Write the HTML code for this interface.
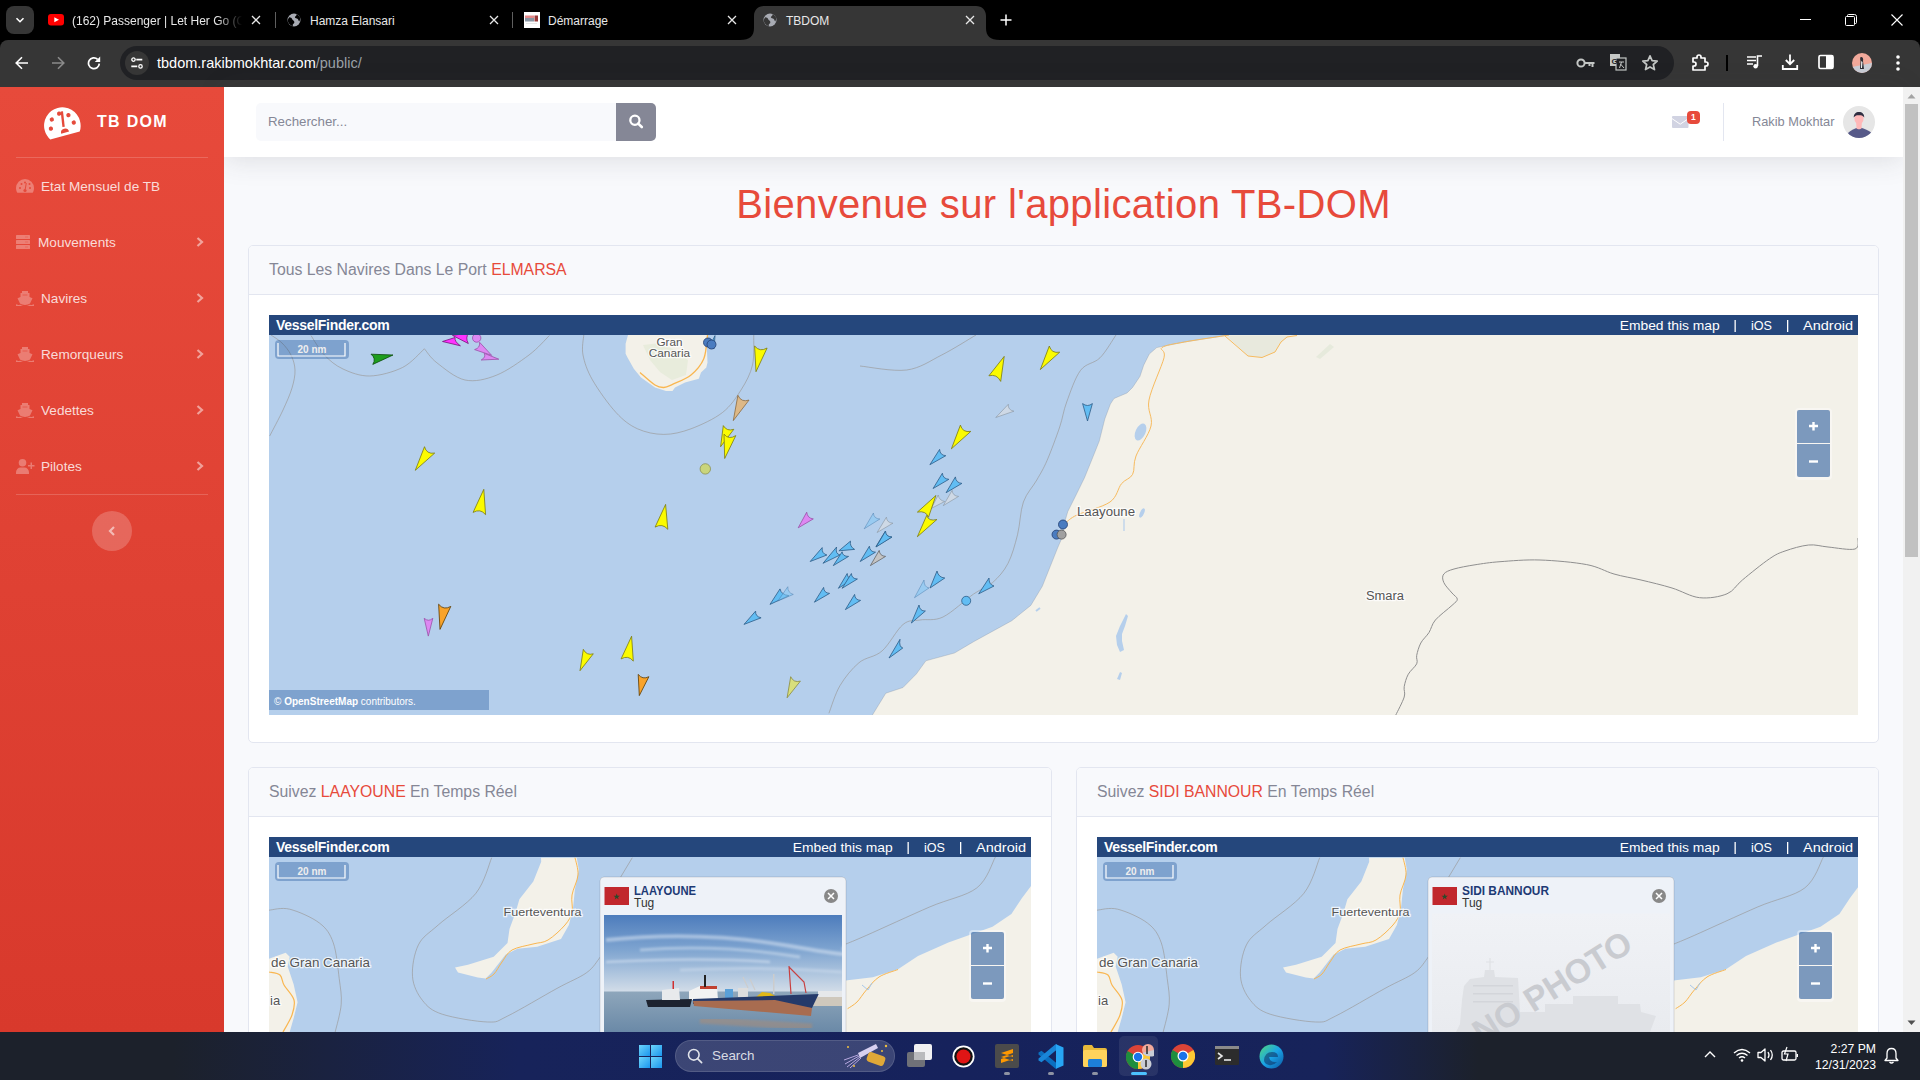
<!DOCTYPE html>
<html><head><meta charset="utf-8">
<style>
*{margin:0;padding:0;box-sizing:border-box}
html,body{width:1920px;height:1080px;overflow:hidden;background:#f8f9fc;font-family:"Liberation Sans",sans-serif}
.abs{position:absolute}
#tabbar{position:absolute;left:0;top:0;width:1920px;height:50px;background:#000}
#toolbar{position:absolute;left:0;top:40px;width:1920px;height:47px;background:#363636;border-radius:8px 8px 0 0}
.tabtxt{position:absolute;color:#e8e8e8;font-size:12px;top:14px;white-space:nowrap}
#sidebar{z-index:5;position:absolute;left:0;top:87px;width:224px;height:945px;background:linear-gradient(180deg,#e74a3b 0%,#d8392c 100%)}
.nav{position:absolute;left:41px;color:rgba(255,255,255,.82);font-size:13.6px;white-space:nowrap;margin-top:1px}
#topbar{position:absolute;left:224px;top:87px;width:1679px;height:70px;background:#fff;box-shadow:0 .15rem 1.75rem 0 rgba(58,59,69,.15)}
#scroll{position:absolute;left:1903px;top:87px;width:17px;height:945px;background:#f1f1f1}
.card{position:absolute;background:#fff;border:1px solid #e3e6f0;border-radius:5px;overflow:hidden}
.chead{position:absolute;left:0;top:0;right:0;height:49px;background:#f8f9fc;border-bottom:1px solid #e3e6f0}
.ctitle{position:absolute;left:20px;top:15px;font-size:15.8px;color:#858796;white-space:nowrap}
.red{color:#e74a3b}
#taskbar{z-index:10;position:absolute;left:0;top:1032px;width:1920px;height:48px;background:linear-gradient(90deg,#1c212b 0%,#1c212b 9%,#1a2240 17%,#17235a 27%,#16225c 50%,#17235a 69%,#1c212b 77%,#1c212b 100%)}
</style></head><body>
<div id="tabbar">
 <div class="abs" style="left:6px;top:6px;width:28px;height:28px;border-radius:8px;background:#363636"></div>
 <svg class="abs" style="left:14px;top:14px" width="12" height="12" viewBox="0 0 12 12"><path d="M2.5 4.2 L6 7.7 L9.5 4.2" stroke="#fff" stroke-width="1.6" fill="none"/></svg>
 <svg class="abs" style="left:48px;top:14px" width="16" height="12" viewBox="0 0 16 12"><rect x="0" y="0" width="16" height="11.5" rx="3" fill="#f00"/><path d="M6.3 3.2 L11 5.75 L6.3 8.3Z" fill="#fff"/></svg>
 <div class="tabtxt" style="left:72px;width:170px;overflow:hidden;-webkit-mask-image:linear-gradient(90deg,#000 85%,transparent)">(162) Passenger | Let Her Go (Official Video)</div>
 <svg class="abs x" style="left:251px;top:15px" width="10" height="10" viewBox="0 0 10 10"><path d="M1 1L9 9M9 1L1 9" stroke="#e8e8e8" stroke-width="1.3"/></svg>
 <div class="abs" style="left:275px;top:12px;width:1px;height:16px;background:#5f5f5f"></div>
 <svg class="abs" style="left:287px;top:13px" width="14" height="14" viewBox="0 0 14 14"><circle cx="7" cy="7" r="6.5" fill="#a8abb3"/><path d="M2.2 4.2c1.4 0 2.6.7 2.9 1.9.3 1.2 1.6 1.4 2.1 2.3.5 1-.2 2.1-1 2.6-.4.3-.6 1-.3 2.4C3.5 12.6 1 10.2.7 7.4c.3-1.2.7-2.4 1.5-3.2zM9.4 1.2c.2.9-.2 1.6-.9 2-.8.4-.8 1.3-.1 1.7.8.5 2 .4 2.6 1.4.5.8.5 1.8 1.3 2.3.6-1.1.9-2.3.9-3.6-.6-1.7-2-3.2-3.8-3.8z" fill="#000"/></svg>
 <div class="tabtxt" style="left:310px">Hamza Elansari</div>
 <svg class="abs x" style="left:489px;top:15px" width="10" height="10" viewBox="0 0 10 10"><path d="M1 1L9 9M9 1L1 9" stroke="#e8e8e8" stroke-width="1.3"/></svg>
 <div class="abs" style="left:512px;top:12px;width:1px;height:16px;background:#5f5f5f"></div>
 <svg class="abs" style="left:524px;top:12px" width="16" height="16" viewBox="0 0 16 16"><rect width="16" height="16" fill="#fff"/><rect x="1" y="3.5" width="9" height="2.5" fill="#e58a8a"/><rect x="1" y="6" width="9" height="3.5" fill="#8a96a4"/><rect x="10.5" y="3.5" width="3.5" height="6" fill="#9a3a3a"/><rect x="2" y="11" width="11" height="1" fill="#e8e8e8"/></svg>
 <div class="tabtxt" style="left:548px">Démarrage</div>
 <svg class="abs x" style="left:727px;top:15px" width="10" height="10" viewBox="0 0 10 10"><path d="M1 1L9 9M9 1L1 9" stroke="#e8e8e8" stroke-width="1.3"/></svg>
 <svg class="abs" style="left:740px;top:6px" width="260" height="34" viewBox="0 0 260 34"><path d="M0 34 C10 34 14 30 14 22 L14 10 C14 4 18 0 24 0 L236 0 C242 0 246 4 246 10 L246 22 C246 30 250 34 260 34Z" fill="#363636"/></svg>
 <svg class="abs" style="left:763px;top:13px" width="14" height="14" viewBox="0 0 14 14"><circle cx="7" cy="7" r="6.5" fill="#a8abb3"/><path d="M2.2 4.2c1.4 0 2.6.7 2.9 1.9.3 1.2 1.6 1.4 2.1 2.3.5 1-.2 2.1-1 2.6-.4.3-.6 1-.3 2.4C3.5 12.6 1 10.2.7 7.4c.3-1.2.7-2.4 1.5-3.2zM9.4 1.2c.2.9-.2 1.6-.9 2-.8.4-.8 1.3-.1 1.7.8.5 2 .4 2.6 1.4.5.8.5 1.8 1.3 2.3.6-1.1.9-2.3.9-3.6-.6-1.7-2-3.2-3.8-3.8z" fill="#363636"/></svg>
 <div class="tabtxt" style="left:786px">TBDOM</div>
 <svg class="abs x" style="left:965px;top:15px" width="10" height="10" viewBox="0 0 10 10"><path d="M1 1L9 9M9 1L1 9" stroke="#e8e8e8" stroke-width="1.3"/></svg>
 <svg class="abs" style="left:1000px;top:14px" width="12" height="12" viewBox="0 0 12 12"><path d="M6 0.5V11.5M0.5 6H11.5" stroke="#fff" stroke-width="1.5"/></svg>
 <div class="abs" style="left:1800px;top:19px;width:11px;height:1px;background:#fff"></div>
 <svg class="abs" style="left:1845px;top:14px" width="12" height="12" viewBox="0 0 12 12"><path d="M2.5 2.5V1.5Q2.5 .5 3.5 .5H9.5Q11.5 .5 11.5 2.5V8.5Q11.5 9.5 10.5 9.5H9.5" stroke="#fff" fill="none" stroke-width="1"/><rect x=".5" y="2.5" width="9" height="9" rx="1" stroke="#fff" fill="none" stroke-width="1"/></svg>
 <svg class="abs" style="left:1891px;top:14px" width="12" height="12" viewBox="0 0 12 12"><path d="M.5 .5L11.5 11.5M11.5 .5L.5 11.5" stroke="#fff" stroke-width="1.1"/></svg>
</div>
<div id="toolbar">
 <svg class="abs" style="left:15px;top:56px;margin-top:-40px" width="14" height="14" viewBox="0 0 14 14"><path d="M13 7H1.5M7 1.2L1.2 7 7 12.8" stroke="#fff" stroke-width="1.6" fill="none"/></svg>
 <svg class="abs" style="left:51px;top:16px" width="14" height="14" viewBox="0 0 14 14"><path d="M1 7H12.5M7 1.2L12.8 7 7 12.8" stroke="#8a8a8a" stroke-width="1.6" fill="none"/></svg>
 <svg class="abs" style="left:87px;top:16px" width="14" height="14" viewBox="0 0 14 14"><path d="M12.3 7.6A5.4 5.4 0 1 1 10.6 3.3" stroke="#fff" stroke-width="1.7" fill="none"/><path d="M13.2 .6V6H7.8Z" fill="#fff"/></svg>
 <div class="abs" style="left:120px;top:6px;width:1554px;height:34px;border-radius:17px;background:#202124"></div>
 <svg class="abs" style="left:1576px;top:17px" width="20" height="12" viewBox="0 0 20 12"><circle cx="5" cy="6" r="3.6" stroke="#c4c7c5" stroke-width="2" fill="none"/><path d="M8.5 6H18.5M16.5 6V10M13.5 6V9" stroke="#c4c7c5" stroke-width="2" fill="none"/></svg>
 <svg class="abs" style="left:1609px;top:13px" width="19" height="19" viewBox="0 0 19 19"><rect x="1" y="1" width="10" height="12" fill="#c4c7c5"/><rect x="7" y="5" width="10" height="12" stroke="#c4c7c5" stroke-width="1.2" fill="#202124"/><text x="2.5" y="11" font-size="8" font-weight="bold" fill="#202124" font-family="Liberation Sans">G</text><path d="M10 9H15M12.5 9L10.5 15M11.5 11L15 15" stroke="#c4c7c5" stroke-width="1"/></svg>
 <svg class="abs" style="left:1641px;top:14px" width="18" height="18" viewBox="0 0 18 18"><path d="M9 1.8L11.1 6.6 16.2 7.1 12.3 10.5 13.5 15.6 9 12.9 4.5 15.6 5.7 10.5 1.8 7.1 6.9 6.6Z" stroke="#c4c7c5" stroke-width="1.7" fill="none" stroke-linejoin="round"/></svg>
 <svg class="abs" style="left:1691px;top:14px" width="19" height="18" viewBox="0 0 19 18"><path d="M2 4H6V3A2 2 0 0 1 10 3V4H14V8H15A2 2 0 0 1 15 12H14V16H2V12H3A2 2 0 0 0 3 8H2Z" stroke="#fff" stroke-width="1.7" fill="none" stroke-linejoin="round"/></svg>
 <div class="abs" style="left:1726px;top:15px;width:2px;height:16px;background:#000"></div>
 <svg class="abs" style="left:1746px;top:14px" width="18" height="16" viewBox="0 0 18 16"><path d="M1 3H10M1 6.5H10M1 10H7M11.5 12V2H16" stroke="#fff" stroke-width="1.6" fill="none"/><circle cx="9.6" cy="12.2" r="2.2" fill="#fff"/></svg>
 <svg class="abs" style="left:1781px;top:13px" width="18" height="18" viewBox="0 0 18 18"><path d="M9 1.5V11M4.8 7L9 11.2 13.2 7M1.8 12V16H16.2V12" stroke="#fff" stroke-width="1.8" fill="none"/></svg>
 <svg class="abs" style="left:1818px;top:14px" width="16" height="16" viewBox="0 0 16 16"><rect x="1" y="1.5" width="14" height="13" rx="1.5" stroke="#fff" stroke-width="1.7" fill="none"/><rect x="8" y="1.5" width="7" height="13" fill="#fff"/></svg>
 <svg class="abs" style="left:1852px;top:13px" width="20" height="20" viewBox="0 0 20 20"><clipPath id="avc"><circle cx="10" cy="10" r="10"/></clipPath><g clip-path="url(#avc)"><rect width="20" height="20" fill="#f1a99b"/><path d="M0 14L20 10V20H0Z" fill="#c9cdd6"/><path d="M9 4C11 4 11.5 6 11 8L12 16H8L8.5 8C8 6 8 4 9 4Z" fill="#2d2d35"/><path d="M9.2 8L10.5 9L10 15H9Z" fill="#f4f4f4"/></g></svg>
 <svg class="abs" style="left:1895px;top:14px" width="6" height="18" viewBox="0 0 6 18"><circle cx="3" cy="3" r="1.8" fill="#fff"/><circle cx="3" cy="9" r="1.8" fill="#fff"/><circle cx="3" cy="15" r="1.8" fill="#fff"/></svg>
 <div class="abs" style="left:125px;top:11px;width:24px;height:24px;border-radius:12px;background:#363636"></div>
 <svg class="abs" style="left:130px;top:16px" width="14" height="14" viewBox="0 0 14 14"><circle cx="3.5" cy="3.6" r="1.7" stroke="#fff" stroke-width="1.3" fill="none"/><path d="M6.3 3.6H12.3M1.3 10.4H7.3" stroke="#fff" stroke-width="1.8"/><circle cx="10.5" cy="10.4" r="1.7" stroke="#fff" stroke-width="1.3" fill="none"/></svg>
 <div class="abs" style="left:157px;top:15px;font-size:14.5px;color:#fff;white-space:nowrap">tbdom.rakibmokhtar.com<span style="color:#9aa0a6">/public/</span></div>
</div>
<div id="sidebar">
 <svg class="abs" style="left:40px;top:17px" width="43" height="37" viewBox="0 0 40 34"><g transform="rotate(-15 20 17)"><path d="M20 3A17 17 0 0 0 3 20C3 23.5 4 27 5.8 29.5H34.2C36 27 37 23.5 37 20A17 17 0 0 0 20 3Z" fill="#fff"/><circle cx="9" cy="20" r="2" fill="#e54a3b"/><circle cx="12" cy="12" r="2" fill="#e54a3b"/><circle cx="20" cy="8.5" r="2" fill="#e54a3b"/><circle cx="28" cy="12" r="2" fill="#e54a3b"/><circle cx="31" cy="20" r="2" fill="#e54a3b"/><path d="M23 7L20.8 21.5" stroke="#e54a3b" stroke-width="2.2"/><path d="M17 27A3.8 3.8 0 1 1 24.6 27Z" fill="#e54a3b"/></g></svg>
 <div class="abs" style="left:97px;top:26px;font-size:16px;font-weight:bold;color:#fff;letter-spacing:1.3px;white-space:nowrap">TB DOM</div>
 <div class="abs" style="left:16px;top:70px;width:192px;height:1px;background:rgba(255,255,255,.18)"></div>
 <svg class="abs" style="left:16px;top:92px" width="18" height="14" viewBox="0 0 18 14"><path d="M9 0A9 9 0 0 0 0 9C0 10.8.5 12.4 1.3 13.8H16.7C17.5 12.4 18 10.8 18 9A9 9 0 0 0 9 0Z" fill="rgba(255,255,255,.3)"/><g fill="#e54a3b"><circle cx="4" cy="9" r="1"/><circle cx="5.5" cy="5" r="1"/><circle cx="9" cy="3.5" r="1"/><circle cx="13.5" cy="5" r="1"/><circle cx="14" cy="9" r="1"/><path d="M10.3 4L9.2 10.5" stroke="#e54a3b" stroke-width="1"/><circle cx="9" cy="11.5" r="1.6"/></g></svg>
 <div class="nav" style="top:91px">Etat Mensuel de TB</div>
 <svg class="abs" style="left:16px;top:148px" width="14" height="14" viewBox="0 0 14 14"><g fill="rgba(255,255,255,.3)"><rect x="0" y="0" width="14" height="4" rx=".6"/><rect x="0" y="5" width="14" height="4" rx=".6"/><rect x="0" y="10" width="14" height="4" rx=".6"/></g><g fill="#e54a3b" opacity=".5"><rect x="9" y="1.6" width="3" height=".8"/><rect x="9" y="6.6" width="3" height=".8"/><rect x="9" y="11.6" width="3" height=".8"/></g></svg>
 <div class="nav" style="top:147px;left:38px">Mouvements</div>
 <svg class="abs chev" style="left:196px;top:150px" width="8" height="10" viewBox="0 0 8 10"><path d="M1.5 1L6 5 1.5 9" stroke="rgba(255,255,255,.5)" stroke-width="2.2" fill="none"/></svg>
 <svg class="abs" style="left:16px;top:204px" width="18" height="15" viewBox="0 0 18 15"><g fill="rgba(255,255,255,.3)"><path d="M6 0H12V2H13.5V6L16.5 7.3 14 12.5C13 13 11 14 9 14 7 14 5 13 4 12.5L1.5 7.3 4.5 6V2H6Z"/><path d="M0 13.2C2 13.8 3 14.5 4 13.5 5.5 14.8 7 15 9 15 11 15 12.5 14.8 14 13.5 15 14.5 16 13.8 18 13.2V15H0Z"/></g><rect x="6.5" y="3" width="5" height="2" fill="#e54a3b" opacity=".35"/></svg>
 <div class="nav" style="top:203px">Navires</div>
 <svg class="abs" style="left:196px;top:206px" width="8" height="10" viewBox="0 0 8 10"><path d="M1.5 1L6 5 1.5 9" stroke="rgba(255,255,255,.5)" stroke-width="2.2" fill="none"/></svg>
 <svg class="abs" style="left:16px;top:260px" width="18" height="15" viewBox="0 0 18 15"><g fill="rgba(255,255,255,.3)"><path d="M6 0H12V2H13.5V6L16.5 7.3 14 12.5C13 13 11 14 9 14 7 14 5 13 4 12.5L1.5 7.3 4.5 6V2H6Z"/><path d="M0 13.2C2 13.8 3 14.5 4 13.5 5.5 14.8 7 15 9 15 11 15 12.5 14.8 14 13.5 15 14.5 16 13.8 18 13.2V15H0Z"/></g><rect x="6.5" y="3" width="5" height="2" fill="#e54a3b" opacity=".35"/></svg>
 <div class="nav" style="top:259px">Remorqueurs</div>
 <svg class="abs" style="left:196px;top:262px" width="8" height="10" viewBox="0 0 8 10"><path d="M1.5 1L6 5 1.5 9" stroke="rgba(255,255,255,.5)" stroke-width="2.2" fill="none"/></svg>
 <svg class="abs" style="left:16px;top:316px" width="18" height="15" viewBox="0 0 18 15"><g fill="rgba(255,255,255,.3)"><path d="M6 0H12V2H13.5V6L16.5 7.3 14 12.5C13 13 11 14 9 14 7 14 5 13 4 12.5L1.5 7.3 4.5 6V2H6Z"/><path d="M0 13.2C2 13.8 3 14.5 4 13.5 5.5 14.8 7 15 9 15 11 15 12.5 14.8 14 13.5 15 14.5 16 13.8 18 13.2V15H0Z"/></g><rect x="6.5" y="3" width="5" height="2" fill="#e54a3b" opacity=".35"/></svg>
 <div class="nav" style="top:315px">Vedettes</div>
 <svg class="abs" style="left:196px;top:318px" width="8" height="10" viewBox="0 0 8 10"><path d="M1.5 1L6 5 1.5 9" stroke="rgba(255,255,255,.5)" stroke-width="2.2" fill="none"/></svg>
 <svg class="abs" style="left:16px;top:372px" width="19" height="15" viewBox="0 0 19 15"><g fill="rgba(255,255,255,.3)"><circle cx="6.5" cy="3.8" r="3.8"/><path d="M0 13.5C0 10.5 2 8.5 4.5 8.5H8.5C11 8.5 13 10.5 13 13.5V15H0Z"/><path d="M14.5 3.5H16V6H18.5V7.5H16V10H14.5V7.5H12V6H14.5Z"/></g></svg>
 <div class="nav" style="top:371px">Pilotes</div>
 <svg class="abs" style="left:196px;top:374px" width="8" height="10" viewBox="0 0 8 10"><path d="M1.5 1L6 5 1.5 9" stroke="rgba(255,255,255,.5)" stroke-width="2.2" fill="none"/></svg>
 <div class="abs" style="left:16px;top:407px;width:192px;height:1px;background:rgba(255,255,255,.18)"></div>
 <div class="abs" style="left:92px;top:424px;width:40px;height:40px;border-radius:20px;background:rgba(255,255,255,.2)"></div>
 <svg class="abs" style="left:108px;top:439px" width="8" height="10" viewBox="0 0 8 10"><path d="M6 1L2 5 6 9" stroke="rgba(255,255,255,.55)" stroke-width="2.2" fill="none"/></svg>
</div>
<div id="topbar">
 <div class="abs" style="left:32px;top:16px;width:360px;height:38px;background:#f8f9fc;border-radius:5px 0 0 5px"></div>
 <div class="abs" style="left:44px;top:27px;font-size:13.3px;color:#858796;white-space:nowrap">Rechercher...</div>
 <div class="abs" style="left:392px;top:16px;width:40px;height:38px;background:#858796;border-radius:0 5px 5px 0"></div>
 <svg class="abs" style="left:404px;top:27px" width="16" height="16" viewBox="0 0 16 16"><circle cx="6.9" cy="6.2" r="4.6" stroke="#fff" stroke-width="2.3" fill="none"/><path d="M10.2 9.6L13.8 13" stroke="#fff" stroke-width="2.6" stroke-linecap="round"/></svg>
 <svg class="abs" style="left:1448px;top:29px" width="17" height="12" viewBox="0 0 17 12"><rect x="0" y="0" width="16.5" height="12" rx="1" fill="#d1d3e2"/><path d="M0 2.6L8.2 8.2 16.5 2.6" stroke="#fff" stroke-width="1" fill="none"/></svg>
 <div class="abs" style="left:1463px;top:24px;width:12.5px;height:12.5px;border-radius:4px;background:#e74a3b;color:#fff;font-size:8.5px;font-weight:bold;text-align:center;line-height:12.5px">1</div>
 <div class="abs" style="left:1499px;top:16px;width:1px;height:38px;background:#e3e6f0"></div>
 <div class="abs" style="left:1528px;top:27px;font-size:12.8px;color:#858796;white-space:nowrap">Rakib Mokhtar</div>
 <svg class="abs" style="left:1619px;top:19px" width="32" height="32" viewBox="0 0 32 32"><clipPath id="avt"><circle cx="16" cy="16" r="16"/></clipPath><g clip-path="url(#avt)"><rect width="32" height="32" fill="#e6e6e6"/><path d="M5 27C8 24 12 22.5 15.5 21.5H17C20.5 22.5 25 24 29 27 26 31 21 33 16 33 11 33 7 31 5 27Z" fill="#575a89"/><path d="M13.2 17H18.8L18.5 22.5C17.5 23.5 14.5 23.5 13.5 22.5Z" fill="#ffb8b8"/><ellipse cx="16" cy="12.5" rx="4.6" ry="5.8" fill="#ffb8b8"/><path d="M10.8 11.5C10.5 8 13 6 16 6 19 6 21.5 8 21.2 11.5 20 9.5 18 9 16 9.2 14 9 12 9.5 10.8 11.5Z" fill="#2f2e41"/></g></svg>
</div>
<div id="scroll"><svg class="abs" style="left:4px;top:6px" width="9" height="6" viewBox="0 0 9 6"><path d="M0.5 5.5L4.5 1 8.5 5.5Z" fill="#a3a3a3"/></svg><div class="abs" style="left:2px;top:17px;width:13px;height:453px;background:#c1c1c1"></div><svg class="abs" style="left:4px;top:933px" width="9" height="6" viewBox="0 0 9 6"><path d="M0.5 .5L4.5 5 8.5 .5Z" fill="#505050"/></svg></div>
<div class="abs" style="left:224px;top:182px;width:1679px;text-align:center;font-size:40px;letter-spacing:.35px;color:#e74a3b">Bienvenue sur l'application TB-DOM</div>
<div class="card" style="left:248px;top:245px;width:1631px;height:498px"><div class="chead"><div class="ctitle">Tous Les Navires Dans Le Port <span class="red">ELMARSA</span></div></div></div>
<div class="card" style="left:248px;top:767px;width:804px;height:400px"><div class="chead"><div class="ctitle">Suivez <span class="red">LAAYOUNE</span> En Temps Réel</div></div></div>
<div class="card" style="left:1076px;top:767px;width:803px;height:400px"><div class="chead"><div class="ctitle">Suivez <span class="red">SIDI BANNOUR</span> En Temps Réel</div></div></div>
<svg class="abs" style="left:269px;top:315px" width="1589" height="400" viewBox="269 315 1589 400">
<rect x="269" y="315" width="1589" height="400" fill="#b5cfec"/>
<polygon points="1228.9,335.0 1184.4,342.0 1156.7,347.6 1149.3,354.0 1143.7,365.2 1140.0,376.3 1132.6,387.4 1127.0,393.0 1114.0,398.5 1110.4,404.0 1104.8,418.9 1099.3,441.0 1091.9,459.6 1084.4,478.0 1075.2,496.7 1067.8,511.5 1064.0,524.4 1063.3,534.8 1057.6,548.0 1050.0,567.0 1042.3,586.3 1030.8,605.4 1011.8,620.7 973.6,641.7 954.5,653.0 925.9,660.8 916.3,674.0 903.0,687.5 885.8,693.2 872.4,715.0 1858.0,715.0 1858.0,335.0" fill="#f3f1e9" />
<polyline points="1228.9,335.0 1184.4,342.0 1156.7,347.6 1149.3,354.0 1143.7,365.2 1140.0,376.3 1132.6,387.4 1127.0,393.0 1114.0,398.5 1110.4,404.0 1104.8,418.9 1099.3,441.0 1091.9,459.6 1084.4,478.0 1075.2,496.7 1067.8,511.5 1064.0,524.4 1063.3,534.8 1057.6,548.0 1050.0,567.0 1042.3,586.3 1030.8,605.4 1011.8,620.7 973.6,641.7 954.5,653.0 925.9,660.8 916.3,674.0 903.0,687.5 885.8,693.2 872.4,715.0" fill="none" stroke="rgba(120,130,145,.35)" stroke-width="0.8" stroke-linejoin="round" />
<polygon points="1226.0,335.5 1248.0,356.0 1262.0,357.5 1275.0,352.0 1281.0,342.0 1290.0,335.5" fill="#e8e9dd" />
<polygon points="1316.0,357.0 1330.0,344.0 1334.0,347.0 1320.0,359.0" fill="#e6eadc" />
<ellipse cx="1140.5" cy="432" rx="5" ry="9" transform="rotate(25 1140.5 432)" fill="#b5cfec"/>
<ellipse cx="1142" cy="513" rx="2" ry="5" transform="rotate(25 1142 513)" fill="#b5cfec"/>
<polygon points="1126.0,614.0 1128.0,616.0 1125.0,626.0 1122.0,634.0 1122.0,641.0 1124.0,650.0 1120.0,652.0 1117.0,645.0 1116.0,636.0 1120.0,626.0" fill="#b5cfec" />
<polygon points="1120.0,672.0 1122.0,673.0 1120.0,680.0 1117.0,679.0" fill="#b5cfec" />
<polyline points="1124.0,519.0 1124.0,531.0" fill="none" stroke="#b5cfec" stroke-width="1.2" stroke-linejoin="round" />
<polyline points="1036.0,611.0 1040.0,608.0" fill="none" stroke="#b5cfec" stroke-width="2" stroke-linejoin="round" />
<polygon points="628.0,335.0 707.5,335.0 706.9,348.8 707.5,362.5 706.3,367.5 701.0,372.5 698.8,378.8 685.0,382.5 675.0,387.5 672.5,391.0 666.0,391.0 655.0,387.5 641.0,377.5 633.8,368.8 627.5,357.5 625.6,353.8 625.6,343.8" fill="#f3f1e9" />
<polygon points="643.0,345.0 660.0,343.0 675.0,350.0 688.0,360.0 686.0,375.0 672.0,380.0 660.0,372.0 650.0,360.0" fill="#e8ecdc" />
<path d="M640.0 372.5 C642.5 374.6 651.0 382.5 655.0 385.0 C659.0 387.5 660.8 387.6 663.8 387.5 C666.7 387.4 668.0 386.5 672.5 384.4 C677.0 382.3 685.8 379.3 691.0 375.0 C696.2 370.7 701.0 365.4 703.8 358.8 C706.5 352.1 706.9 339.0 707.5 335.0" fill="none" stroke="#f9b650" stroke-width="1.3" />
<path d="M583.8 335.0 C583.6 338.3 581.5 347.5 583.0 355.0 C584.5 362.5 587.0 370.4 592.5 380.0 C598.0 389.6 608.5 404.4 616.0 412.5 C623.5 420.6 629.5 425.1 637.5 428.8 C645.5 432.4 654.8 434.4 663.8 434.4 C672.7 434.4 681.2 432.4 691.0 428.8 C700.8 425.1 714.2 419.0 722.5 412.5 C730.8 406.0 736.0 397.9 741.0 390.0 C746.0 382.1 750.4 374.2 752.5 365.0 C754.6 355.8 753.5 340.0 753.8 335.0" fill="none" stroke="rgba(150,145,140,.65)" stroke-width="0.9" />
<path d="M269.7 436.0 C271.9 431.7 279.3 418.0 283.0 410.0 C286.7 402.0 290.0 394.7 292.0 388.0 C294.0 381.3 295.2 375.5 295.0 370.0 C294.8 364.5 293.2 359.5 291.0 355.0 C288.8 350.5 285.3 346.3 282.0 343.0 C278.7 339.7 272.8 336.3 271.0 335.0" fill="none" stroke="rgba(150,145,140,.65)" stroke-width="0.9" />
<path d="M311.0 335.5 C313.2 338.8 319.1 349.4 324.4 355.0 C329.7 360.6 335.4 365.5 343.0 369.0 C350.6 372.5 359.8 376.2 369.7 376.0 C379.6 375.8 393.4 372.0 402.5 367.5 C411.6 363.0 420.8 351.9 424.4 348.8" fill="none" stroke="rgba(150,145,140,.65)" stroke-width="0.9" />
<path d="M424.4 348.8 C426.5 351.1 430.1 357.6 436.9 362.8 C443.7 368.0 455.1 377.9 465.0 380.0 C474.9 382.1 485.6 379.5 496.2 375.3 C506.9 371.1 520.1 361.6 529.0 355.0 C537.9 348.4 546.0 338.8 549.4 335.5" fill="none" stroke="rgba(150,145,140,.65)" stroke-width="0.9" />
<path d="M860.0 366.0 C867.8 366.7 893.1 371.8 906.7 370.0 C920.3 368.2 930.2 360.8 941.7 355.0 C953.2 349.2 970.3 338.3 976.0 335.0" fill="none" stroke="rgba(150,145,140,.65)" stroke-width="0.9" />
<path d="M1116.0 335.0 C1113.3 338.8 1105.9 351.9 1100.0 357.8 C1094.1 363.7 1086.1 362.9 1080.6 370.3 C1075.0 377.7 1070.2 392.6 1066.7 402.0 C1063.2 411.4 1063.0 417.2 1059.7 427.0 C1056.4 436.8 1050.8 451.8 1047.0 460.6 C1043.2 469.4 1040.7 473.1 1036.8 480.0 C1032.9 486.9 1026.6 492.9 1023.4 502.0 C1020.2 511.1 1020.1 524.6 1017.5 534.8 C1014.9 545.0 1012.1 555.4 1008.0 563.4 C1003.9 571.4 998.4 577.4 992.7 582.5 C987.0 587.6 981.9 588.2 973.6 594.0 C965.3 599.8 951.9 612.7 943.0 617.0 C934.1 621.3 926.7 618.8 920.0 620.0 C913.3 621.2 909.3 619.3 903.0 624.5 C896.7 629.7 889.3 644.6 882.0 651.0 C874.7 657.4 866.0 656.9 859.0 662.7 C852.0 668.5 845.0 677.2 840.0 685.6 C835.0 694.0 830.8 708.7 828.9 713.3" fill="none" stroke="rgba(150,145,140,.65)" stroke-width="0.9" />
<path d="M1229.0 335.0 C1221.6 336.2 1195.6 339.9 1184.4 342.0 C1173.2 344.1 1165.4 345.0 1162.0 347.6 C1158.6 350.2 1166.2 349.1 1164.0 357.8 C1161.8 366.5 1151.2 388.6 1149.0 400.0 C1146.8 411.4 1153.2 416.7 1151.0 426.0 C1148.8 435.3 1139.1 447.9 1136.0 456.0 C1132.9 464.1 1135.0 469.8 1132.6 474.4 C1130.2 479.0 1125.3 479.1 1121.5 483.7 C1117.7 488.3 1117.4 496.8 1110.0 502.0 C1102.6 507.2 1084.3 511.6 1077.0 515.0 C1069.7 518.4 1067.8 521.3 1066.0 522.6" fill="none" stroke="#f7bb5f" stroke-width="1" />
<polyline points="1225.0,336.0 1248.0,356.0 1262.0,357.5 1275.0,352.0 1281.0,342.0 1287.0,337.0 1297.0,335.5" fill="none" stroke="#f7bb5f" stroke-width="1" stroke-linejoin="round" />
<path d="M1858.0 538.0 C1857.5 539.8 1860.0 547.5 1855.0 549.0 C1850.0 550.5 1835.7 547.7 1828.0 547.0 C1820.3 546.3 1815.8 544.3 1808.6 545.0 C1801.4 545.7 1791.5 548.7 1785.0 551.0 C1778.5 553.3 1776.7 553.9 1769.6 558.7 C1762.5 563.5 1749.5 574.1 1742.4 580.0 C1735.3 585.9 1734.1 590.8 1727.0 593.8 C1719.9 596.8 1708.8 598.7 1699.6 597.7 C1690.4 596.7 1681.8 591.0 1672.0 588.0 C1662.2 585.0 1650.7 582.3 1641.0 580.0 C1631.3 577.7 1623.0 576.6 1614.0 574.0 C1605.0 571.4 1599.0 566.9 1586.7 564.6 C1574.4 562.3 1554.5 560.5 1540.0 560.0 C1525.5 559.5 1510.8 560.9 1500.0 561.7 C1489.2 562.5 1482.7 563.6 1475.0 564.8 C1467.3 566.0 1459.2 567.5 1454.0 569.0 C1448.8 570.5 1445.5 571.8 1443.8 574.0 C1442.0 576.2 1442.4 579.3 1443.8 582.5 C1445.1 585.7 1449.7 590.2 1452.0 593.0 C1454.3 595.8 1457.3 597.1 1457.3 599.2 C1457.3 601.3 1455.7 601.9 1452.0 605.4 C1448.3 608.9 1439.2 615.5 1435.4 620.0 C1431.6 624.5 1431.4 628.7 1429.0 632.5 C1426.6 636.3 1422.8 639.2 1420.8 643.0 C1418.8 646.8 1417.4 651.9 1416.7 655.4 C1416.0 658.9 1418.1 660.6 1416.7 663.8 C1415.3 666.9 1410.4 670.4 1408.3 674.2 C1406.2 678.0 1404.9 682.9 1404.2 686.7 C1403.5 690.5 1405.6 692.3 1404.2 697.0 C1402.8 701.7 1397.2 712.0 1395.8 715.0" fill="none" stroke="#8f8f8f" stroke-width="1" />
<text x="669.4" y="345.6" font-family="Liberation Sans" font-size="11.5" text-anchor="middle" fill="#555" textLength="26" lengthAdjust="spacingAndGlyphs" stroke="#fff" stroke-width="2.5" stroke-opacity=".75" paint-order="stroke">Gran</text>
<text x="669.4" y="356.5" font-family="Liberation Sans" font-size="11.5" text-anchor="middle" fill="#555" textLength="41.5" lengthAdjust="spacingAndGlyphs" stroke="#fff" stroke-width="2.5" stroke-opacity=".75" paint-order="stroke">Canaria</text>
<text x="1077.0" y="516.0" font-family="Liberation Sans" font-size="12" text-anchor="start" fill="#555" textLength="58" lengthAdjust="spacingAndGlyphs" stroke="#fff" stroke-width="2.5" stroke-opacity=".75" paint-order="stroke">Laayoune</text>
<text x="1366.0" y="600.0" font-family="Liberation Sans" font-size="12" text-anchor="start" fill="#555" textLength="38" lengthAdjust="spacingAndGlyphs" stroke="#fff" stroke-width="2.5" stroke-opacity=".75" paint-order="stroke">Smara</text>
<path d="M442.5 341.5 L455.0 337.5 Q454.4 341.6 460.4 345.8 Z" fill="#ff33ff" stroke="#7a107a" stroke-width=".8" stroke-linejoin="round"/>
<path d="M452.5 335.4 L468.8 333.0 Q465.0 337.6 468.3 343.5 Z" fill="#ff33ff" stroke="#7a107a" stroke-width=".8" stroke-linejoin="round"/>
<path d="M491.7 355.4 L479.6 342.3 Q480.3 348.0 474.6 349.6 Z" fill="#dd88f2" stroke="#9a50a8" stroke-width=".8" stroke-linejoin="round"/>
<path d="M498.8 359.2 L484.2 353.3 Q486.3 357.2 481.2 360.0 Z" fill="#dd88f2" stroke="#9a50a8" stroke-width=".8" stroke-linejoin="round"/>
<path d="M393.0 355.0 L371.0 354.2 Q376.5 358.4 372.8 364.4 Z" fill="#1e9e1e" stroke="#0b4a0b" stroke-width=".8" stroke-linejoin="round"/>
<path d="M415.3 470.3 L424.5 446.7 Q426.5 454.4 434.7 453.1 Z" fill="#fbfb00" stroke="#7a7a10" stroke-width=".8" stroke-linejoin="round"/>
<path d="M483.8 489.3 L473.1 512.4 Q480.3 508.2 485.6 514.7 Z" fill="#fbfb00" stroke="#7a7a10" stroke-width=".8" stroke-linejoin="round"/>
<path d="M440.0 629.4 L438.6 604.2 Q443.7 610.6 450.8 606.4 Z" fill="#f9a32a" stroke="#5a3a00" stroke-width=".8" stroke-linejoin="round"/>
<path d="M428.3 636.1 L424.2 618.3 Q428.5 622.2 432.8 618.3 Z" fill="#dd88f2" stroke="#9a50a8" stroke-width=".8" stroke-linejoin="round"/>
<path d="M665.6 504.4 L655.1 527.1 Q662.4 523.0 667.8 529.3 Z" fill="#fbfb00" stroke="#7a7a10" stroke-width=".8" stroke-linejoin="round"/>
<path d="M580.0 670.7 L583.3 649.3 Q586.5 655.8 593.3 653.8 Z" fill="#fbfb00" stroke="#7a7a10" stroke-width=".8" stroke-linejoin="round"/>
<path d="M631.6 636.2 L621.1 658.9 Q628.2 654.8 633.3 661.1 Z" fill="#fbfb00" stroke="#7a7a10" stroke-width=".8" stroke-linejoin="round"/>
<path d="M639.3 695.6 L638.2 674.4 Q642.6 680.0 648.9 676.7 Z" fill="#f9a32a" stroke="#5a3a00" stroke-width=".8" stroke-linejoin="round"/>
<path d="M787.1 697.8 L790.7 676.7 Q793.7 683.1 800.4 681.1 Z" fill="#d8df7c" stroke="#8a8c40" stroke-width=".8" stroke-linejoin="round"/>
<path d="M798.2 527.8 L806.7 512.2 Q807.4 518.2 813.3 518.9 Z" fill="#dd88f2" stroke="#9a50a8" stroke-width=".8" stroke-linejoin="round"/>
<path d="M756.0 371.7 L754.6 346.0 Q759.8 352.4 767.1 348.0 Z" fill="#fbfb00" stroke="#7a7a10" stroke-width=".8" stroke-linejoin="round"/>
<path d="M733.3 420.6 L737.9 395.3 Q741.2 402.7 749.0 400.1 Z" fill="#ddb886" stroke="#8a6a40" stroke-width=".8" stroke-linejoin="round"/>
<path d="M720.6 446.7 L723.3 425.6 Q726.8 431.7 733.8 429.3 Z" fill="#fbfb00" stroke="#7a7a10" stroke-width=".8" stroke-linejoin="round"/>
<path d="M724.7 458.5 L724.0 434.2 Q728.8 440.1 735.8 435.6 Z" fill="#fbfb00" stroke="#7a7a10" stroke-width=".8" stroke-linejoin="round"/>
<path d="M715.0 335.6 L709.0 348.0 Q712.3 345.7 714.0 349.0 Z" fill="#62bdf3" stroke="#2d5c86" stroke-width=".8" stroke-linejoin="round"/>
<path d="M810.2 561.5 L822.2 547.6 Q821.4 553.5 826.9 555.0 Z" fill="#62bdf3" stroke="#2d5c86" stroke-width=".8" stroke-linejoin="round"/>
<path d="M823.0 563.3 L836.6 547.0 Q834.9 553.7 840.0 555.0 Z" fill="#62bdf3" stroke="#2d5c86" stroke-width=".8" stroke-linejoin="round"/>
<path d="M838.9 550.8 L850.5 541.1 Q849.5 546.5 854.6 549.4 Z" fill="#62bdf3" stroke="#2d5c86" stroke-width=".8" stroke-linejoin="round"/>
<path d="M833.3 565.6 L842.1 551.8 Q842.7 556.6 848.6 556.4 Z" fill="#62bdf3" stroke="#2d5c86" stroke-width=".8" stroke-linejoin="round"/>
<path d="M860.2 561.5 L869.4 546.2 Q869.8 551.9 875.5 552.2 Z" fill="#62bdf3" stroke="#2d5c86" stroke-width=".8" stroke-linejoin="round"/>
<path d="M870.4 565.6 L879.2 550.4 Q879.8 556.1 885.6 556.4 Z" fill="#c4c4c4" stroke="#666" stroke-width=".8" stroke-linejoin="round"/>
<path d="M875.9 546.7 L885.2 531.4 Q885.7 537.0 891.7 537.0 Z" fill="#62bdf3" stroke="#2d5c86" stroke-width=".8" stroke-linejoin="round"/>
<path d="M838.4 588.3 L847.2 573.5 Q847.5 578.9 853.0 579.0 Z" fill="#62bdf3" stroke="#2d5c86" stroke-width=".8" stroke-linejoin="round"/>
<path d="M842.1 588.3 L851.4 573.5 Q851.7 578.9 857.4 579.0 Z" fill="#62bdf3" stroke="#2d5c86" stroke-width=".8" stroke-linejoin="round"/>
<path d="M814.4 602.2 L823.6 587.4 Q823.9 593.0 829.6 593.4 Z" fill="#62bdf3" stroke="#2d5c86" stroke-width=".8" stroke-linejoin="round"/>
<path d="M845.4 609.6 L854.6 594.4 Q854.9 600.1 860.6 600.4 Z" fill="#62bdf3" stroke="#2d5c86" stroke-width=".8" stroke-linejoin="round"/>
<path d="M770.0 604.4 L780.0 588.9 Q781.3 594.9 788.9 595.6 Z" fill="#62bdf3" stroke="#2d5c86" stroke-width=".8" stroke-linejoin="round"/>
<path d="M777.8 601.1 L787.8 586.7 Q787.7 592.9 793.3 594.4 Z" fill="rgba(130,200,245,.55)" stroke="rgba(60,110,160,.5)" stroke-width=".8" stroke-linejoin="round"/>
<path d="M744.0 624.4 L755.6 611.1 Q755.2 616.6 761.1 617.8 Z" fill="#62bdf3" stroke="#2d5c86" stroke-width=".8" stroke-linejoin="round"/>
<path d="M864.2 528.8 L873.4 513.0 Q873.9 518.8 879.9 519.0 Z" fill="rgba(130,200,245,.55)" stroke="rgba(60,110,160,.5)" stroke-width=".8" stroke-linejoin="round"/>
<path d="M877.1 532.5 L886.4 517.2 Q886.9 522.9 892.9 523.2 Z" fill="rgba(215,220,228,.75)" stroke="rgba(120,130,140,.6)" stroke-width=".8" stroke-linejoin="round"/>
<path d="M876.2 546.9 L885.5 531.1 Q886.0 536.9 891.9 537.1 Z" fill="#62bdf3" stroke="#2d5c86" stroke-width=".8" stroke-linejoin="round"/>
<path d="M933.1 488.5 L942.4 473.2 Q942.9 478.9 948.9 479.3 Z" fill="#62bdf3" stroke="#2d5c86" stroke-width=".8" stroke-linejoin="round"/>
<path d="M946.1 492.7 L955.4 476.9 Q955.9 482.9 961.9 483.4 Z" fill="#62bdf3" stroke="#2d5c86" stroke-width=".8" stroke-linejoin="round"/>
<path d="M943.3 505.6 L952.1 490.4 Q952.7 496.1 958.6 496.4 Z" fill="rgba(215,220,228,.75)" stroke="rgba(120,130,140,.6)" stroke-width=".8" stroke-linejoin="round"/>
<path d="M931.3 508.4 L938.2 495.0 Q939.2 500.5 944.7 501.5 Z" fill="rgba(215,220,228,.75)" stroke="rgba(120,130,140,.6)" stroke-width=".8" stroke-linejoin="round"/>
<path d="M935.9 495.5 L917.4 512.1 Q925.8 510.4 928.5 517.2 Z" fill="#fbfb00" stroke="#7a7a10" stroke-width=".8" stroke-linejoin="round"/>
<path d="M917.4 536.7 L926.7 515.4 Q928.6 521.7 936.9 519.5 Z" fill="#fbfb00" stroke="#7a7a10" stroke-width=".8" stroke-linejoin="round"/>
<path d="M1004.2 356.4 L988.9 375.8 Q996.9 373.7 1000.7 381.4 Z" fill="#fbfb00" stroke="#7a7a10" stroke-width=".8" stroke-linejoin="round"/>
<path d="M1040.3 369.6 L1049.3 346.0 Q1051.4 353.6 1059.7 352.2 Z" fill="#fbfb00" stroke="#7a7a10" stroke-width=".8" stroke-linejoin="round"/>
<path d="M995.8 417.5 L1008.3 404.3 Q1007.7 409.9 1013.9 411.2 Z" fill="rgba(215,220,228,.75)" stroke="rgba(120,130,140,.6)" stroke-width=".8" stroke-linejoin="round"/>
<path d="M1087.5 421.0 L1082.6 403.6 Q1087.5 407.4 1092.4 403.6 Z" fill="#62bdf3" stroke="#2d5c86" stroke-width=".8" stroke-linejoin="round"/>
<path d="M951.4 448.8 L960.4 425.1 Q962.5 432.8 970.8 431.4 Z" fill="#fbfb00" stroke="#7a7a10" stroke-width=".8" stroke-linejoin="round"/>
<path d="M929.9 464.7 L939.6 449.4 Q939.9 455.2 945.8 455.7 Z" fill="#62bdf3" stroke="#2d5c86" stroke-width=".8" stroke-linejoin="round"/>
<path d="M914.5 597.7 L924.0 580.0 Q923.9 587.0 929.0 588.0 Z" fill="rgba(130,200,245,.55)" stroke="rgba(60,110,160,.5)" stroke-width=".8" stroke-linejoin="round"/>
<path d="M930.0 588.0 L937.0 571.0 Q938.5 577.5 944.8 578.0 Z" fill="#62bdf3" stroke="#2d5c86" stroke-width=".8" stroke-linejoin="round"/>
<path d="M978.7 593.8 L989.0 578.0 Q988.7 584.6 994.0 586.0 Z" fill="#62bdf3" stroke="#2d5c86" stroke-width=".8" stroke-linejoin="round"/>
<path d="M911.4 623.0 L919.0 605.0 Q919.8 611.3 925.4 611.0 Z" fill="#62bdf3" stroke="#2d5c86" stroke-width=".8" stroke-linejoin="round"/>
<path d="M889.0 658.0 L900.0 639.3 Q898.7 646.8 902.8 648.0 Z" fill="#62bdf3" stroke="#2d5c86" stroke-width=".8" stroke-linejoin="round"/>
<circle cx="705.3" cy="468.9" r="5.2" fill="#c9d57c" stroke="#8a9050" stroke-width=".8"/>
<circle cx="476.7" cy="338.0" r="4.2" fill="#dd88f2" stroke="#9a50a8" stroke-width=".8"/>
<circle cx="708.0" cy="342.5" r="4.5" fill="#4a7cc0" stroke="#223e70" stroke-width=".8"/>
<circle cx="711.5" cy="344.5" r="4.5" fill="#4a7cc0" stroke="#223e70" stroke-width=".8"/>
<circle cx="1063.0" cy="524.5" r="4.5" fill="#4a7cc0" stroke="#223e70" stroke-width=".8"/>
<circle cx="1056.5" cy="534.6" r="4.5" fill="#4a7cc0" stroke="#223e70" stroke-width=".8"/>
<circle cx="1061.6" cy="534.6" r="4.5" fill="#a0a0a0" stroke="#555" stroke-width=".8"/>
<circle cx="966.2" cy="600.8" r="4.5" fill="#62bdf3" stroke="#2d5c86" stroke-width=".8"/>
<rect x="269" y="315" width="1589" height="20" fill="#25477c"/><text x="276" y="330" font-family="Liberation Sans" font-weight="bold" font-size="14" letter-spacing="-.3" fill="#fff">VesselFinder.com</text><text x="1619.7" y="330" font-family="Liberation Sans" font-size="13.2" fill="#fff" textLength="100" lengthAdjust="spacingAndGlyphs">Embed this map</text><rect x="1734.5" y="320" width="1.3" height="12" fill="#fff"/><text x="1751.0" y="330" font-family="Liberation Sans" font-size="13.2" fill="#fff" textLength="21" lengthAdjust="spacingAndGlyphs">iOS</text><rect x="1787.0" y="320" width="1.3" height="12" fill="#fff"/><text x="1803.0" y="330" font-family="Liberation Sans" font-size="13.2" fill="#fff" textLength="50" lengthAdjust="spacingAndGlyphs">Android</text>
<rect x="275" y="340" width="74" height="19" rx="4" fill="rgba(0,60,136,.3)"/><polyline points="278,343 278,356 345,356 345,343" fill="none" stroke="#fff" stroke-width="1.2"/><text x="312" y="353" font-family="Liberation Sans" font-weight="bold" font-size="10" fill="#eee" text-anchor="middle">20 nm</text>
<rect x="1795.0" y="408.0" width="37" height="72" rx="4" fill="rgba(255,255,255,.4)"/><path d="M1799.0 410.0h29a2 2 0 0 1 2 2v31h-33v-31a2 2 0 0 1 2-2z" fill="rgba(0,60,136,.5)"/><path d="M1797.0 444.0h33v31a2 2 0 0 1-2 2h-29a2 2 0 0 1-2-2z" fill="rgba(0,60,136,.5)"/><path d="M1809.0 426.0H1818.0M1813.5 422.0V430.5" stroke="#fff" stroke-width="2.4"/><path d="M1809.0 461.5H1818.0" stroke="#fff" stroke-width="2.4"/>
<rect x="269" y="690" width="220" height="20" fill="rgba(0,60,136,.3)"/>
<text x="274" y="705" font-family="Liberation Sans" font-size="10" fill="#fff">&#169; <tspan font-weight="bold">OpenStreetMap</tspan> contributors.</text>
</svg>
<svg class="abs" style="left:269px;top:837px" width="762" height="195" viewBox="269 837 762 195">
<rect x="269" y="837" width="762" height="195" fill="#b5cfec"/>
<polygon points="541.0,857.7 576.8,857.7 578.8,869.6 574.9,889.4 572.9,909.2 568.9,925.0 561.0,939.0 537.2,946.8 517.4,948.8 505.5,954.8 491.7,972.6 485.7,978.5 477.8,977.5 458.0,972.6 455.0,967.6 468.0,964.7 493.7,956.7 507.5,942.9 509.5,929.0 515.4,913.0 519.4,899.3 533.3,881.5 541.2,861.7" fill="#f3f1e9" />
<path d="M575.0 857.7 C575.5 860.6 578.5 868.8 578.0 875.0 C577.5 881.2 573.0 888.8 572.0 895.0 C571.0 901.2 573.2 907.0 572.0 912.0 C570.8 917.0 569.0 920.3 565.0 925.0 C561.0 929.7 553.3 936.8 548.0 940.0 C542.7 943.2 539.0 942.3 533.0 944.0 C527.0 945.7 517.2 947.0 512.0 950.0 C506.8 953.0 505.0 958.0 502.0 962.0 C499.0 966.0 496.7 971.2 494.0 974.0 C491.3 976.8 487.3 978.2 486.0 979.0" fill="none" stroke="#f9b650" stroke-width="1" />
<polygon points="269.0,958.7 285.7,952.8 289.7,956.7 287.7,966.6 293.7,984.5 297.6,1002.3 293.7,1018.0 289.7,1032.0 269.0,1032.0" fill="#f3f1e9" />
<path d="M269.0 972.0 C270.8 972.5 277.5 972.8 280.0 975.0 C282.5 977.2 281.7 980.8 284.0 985.0 C286.3 989.2 292.7 995.0 294.0 1000.0 C295.3 1005.0 293.8 1009.7 292.0 1015.0 C290.2 1020.3 284.5 1029.2 283.0 1032.0" fill="none" stroke="#f9b650" stroke-width="1.2" />
<path d="M269.0 910.2 C272.4 910.0 281.3 907.1 289.7 909.2 C298.1 911.3 312.1 917.4 319.4 923.0 C326.7 928.6 330.0 933.6 333.3 942.9 C336.6 952.1 337.9 968.3 339.2 978.5 C340.5 988.7 341.9 995.4 341.2 1004.3 C340.5 1013.2 336.2 1027.4 335.2 1032.0" fill="none" stroke="rgba(150,145,140,.65)" stroke-width="0.9" />
<path d="M491.7 857.7 C489.1 863.7 484.7 882.2 475.8 893.4 C466.9 904.6 447.8 916.4 438.2 925.0 C428.6 933.6 422.7 936.3 418.4 944.9 C414.1 953.5 411.8 967.3 412.5 976.5 C413.2 985.7 417.4 994.0 422.4 1000.3 C427.3 1006.6 431.3 1010.6 442.2 1014.2 C453.1 1017.8 476.8 1021.7 487.7 1022.0 C498.6 1022.3 495.9 1021.7 507.5 1016.1 C519.0 1010.5 543.8 995.6 557.0 988.4 C570.2 981.1 579.4 977.9 586.7 972.6 C594.0 967.3 596.4 961.8 600.6 956.7 C604.8 951.6 607.1 947.3 612.0 942.0 C616.9 936.7 627.0 927.8 630.0 925.0" fill="none" stroke="rgba(150,145,140,.65)" stroke-width="0.9" />
<polyline points="632.3,857.7 620.4,877.5" fill="none" stroke="rgba(150,145,140,.65)" stroke-width="0.9" stroke-linejoin="round" />
<path d="M995.4 857.0 C992.3 862.2 987.6 879.7 976.7 888.0 C965.8 896.3 948.1 899.0 929.8 906.9 C911.5 914.8 880.8 929.0 866.8 935.2 C852.8 941.4 849.5 942.5 846.0 944.0" fill="none" stroke="rgba(150,145,140,.65)" stroke-width="0.9" />
<polygon points="1031.0,886.0 1022.0,898.0 1011.4,914.0 992.5,926.8 948.4,942.5 918.0,956.0 898.0,969.3 872.8,977.2 847.6,980.3 820.0,985.0 820.0,1032.0 1031.0,1032.0" fill="#f3f1e9" />
<path d="M898.0 969.5 C894.8 970.8 884.2 973.6 879.0 977.0 C873.8 980.4 870.2 985.6 866.5 989.8 C862.8 994.0 860.1 998.9 857.0 1002.0 C853.9 1005.1 849.2 1007.6 847.6 1008.7" fill="none" stroke="#f9b650" stroke-width="1" />
<polyline points="862.0,985.0 868.0,990.0 872.0,983.0" fill="none" stroke="#a8c8e8" stroke-width="1" stroke-linejoin="round" />
<text x="503.6" y="915.5" font-family="Liberation Sans" font-size="11.5" text-anchor="start" fill="#555" textLength="78" lengthAdjust="spacingAndGlyphs" stroke="#fff" stroke-width="2.5" stroke-opacity=".75" paint-order="stroke">Fuerteventura</text>
<text x="271.0" y="967.0" font-family="Liberation Sans" font-size="13" text-anchor="start" fill="#555" textLength="99" lengthAdjust="spacingAndGlyphs" stroke="#fff" stroke-width="2.5" stroke-opacity=".75" paint-order="stroke">de Gran Canaria</text>
<text x="270.0" y="1005.0" font-family="Liberation Sans" font-size="13" text-anchor="start" fill="#555" stroke="#fff" stroke-width="2.5" stroke-opacity=".75" paint-order="stroke">ia</text>
<rect x="269" y="837" width="762" height="20" fill="#25477c"/><text x="276" y="852" font-family="Liberation Sans" font-weight="bold" font-size="14" letter-spacing="-.3" fill="#fff">VesselFinder.com</text><text x="792.7" y="852" font-family="Liberation Sans" font-size="13.2" fill="#fff" textLength="100" lengthAdjust="spacingAndGlyphs">Embed this map</text><rect x="907.5" y="842" width="1.3" height="12" fill="#fff"/><text x="924.0" y="852" font-family="Liberation Sans" font-size="13.2" fill="#fff" textLength="21" lengthAdjust="spacingAndGlyphs">iOS</text><rect x="960.0" y="842" width="1.3" height="12" fill="#fff"/><text x="976.0" y="852" font-family="Liberation Sans" font-size="13.2" fill="#fff" textLength="50" lengthAdjust="spacingAndGlyphs">Android</text>
<rect x="275" y="862" width="74" height="19" rx="4" fill="rgba(0,60,136,.3)"/><polyline points="278,865 278,878 345,878 345,865" fill="none" stroke="#fff" stroke-width="1.2"/><text x="312" y="875" font-family="Liberation Sans" font-weight="bold" font-size="10" fill="#eee" text-anchor="middle">20 nm</text>
<rect x="969.0" y="930.0" width="37" height="72" rx="4" fill="rgba(255,255,255,.4)"/><path d="M973.0 932.0h29a2 2 0 0 1 2 2v31h-33v-31a2 2 0 0 1 2-2z" fill="rgba(0,60,136,.5)"/><path d="M971.0 966.0h33v31a2 2 0 0 1-2 2h-29a2 2 0 0 1-2-2z" fill="rgba(0,60,136,.5)"/><path d="M983.0 948.0H992.0M987.5 944.0V952.5" stroke="#fff" stroke-width="2.4"/><path d="M983.0 983.5H992.0" stroke="#fff" stroke-width="2.4"/>
<rect x="600" y="877" width="246" height="170" rx="4" fill="#eef2f8" stroke="rgba(0,0,0,.12)" stroke-width="1"/>
<rect x="604.5" y="887" width="24.5" height="18" fill="#c1272d"/>
<path d="M616.7 893.5l.8 2.3h2.4l-1.9 1.4.7 2.3-2-1.4-2 1.4.7-2.3-1.9-1.4h2.4z" fill="#2a4a2a"/>
<text x="634" y="895.2" font-family="Liberation Sans" font-weight="bold" font-size="12.5" fill="#1d3a75" textLength="62" lengthAdjust="spacingAndGlyphs">LAAYOUNE</text>
<text x="634" y="907" font-family="Liberation Sans" font-size="12" fill="#333">Tug</text>
<circle cx="831" cy="896" r="7" fill="#888"/><path d="M828 893L834 899M834 893L828 899" stroke="#fff" stroke-width="1.5"/>
<clipPath id="ph269"><rect x="604" y="913" width="238" height="120"/></clipPath><g clip-path="url(#ph269)">
<defs><linearGradient id="sky" x1="0" y1="0" x2="0" y2="1"><stop offset="0" stop-color="#4d7cbc"/><stop offset=".45" stop-color="#7ea4d0"/><stop offset=".8" stop-color="#b4c9e0"/><stop offset="1" stop-color="#d3dde8"/></linearGradient>
<linearGradient id="sea" x1="0" y1="0" x2="0" y2="1"><stop offset="0" stop-color="#8ea6bb"/><stop offset="1" stop-color="#6a89a7"/></linearGradient></defs>
<rect x="604" y="915" width="238" height="77" fill="url(#sky)"/>
<filter id="bl1"><feGaussianBlur stdDeviation="1.3"/></filter>
<g filter="url(#bl1)"><path d="M606 940 Q700 930 790 946 T842 948" stroke="rgba(235,242,250,.45)" stroke-width="4" fill="none"/>
<path d="M640 950 Q720 944 800 957" stroke="rgba(235,242,250,.4)" stroke-width="3" fill="none"/>
<path d="M606 962 Q700 957 770 962" stroke="rgba(235,242,250,.45)" stroke-width="2.5" fill="none"/>
<path d="M680 970 Q760 966 842 972" stroke="rgba(235,242,250,.3)" stroke-width="3" fill="none"/></g>
<rect x="604" y="991.5" width="238" height="41" fill="url(#sea)"/>
<path d="M700 1020 Q760 1024 812 1027" stroke="rgba(180,140,110,.45)" stroke-width="7" fill="none" filter="url(#bl1)"/>
<rect x="812" y="996" width="30" height="10" fill="#cfc8bc"/><rect x="818" y="991" width="24" height="6" fill="#e6e8ea"/>
<path d="M689 991 L700 986 L717 986 L718 1000 L689 1000Z" fill="#f2f2f2"/><rect x="700" y="986" width="17" height="3" fill="#c04030"/>
<rect x="704" y="975" width="2" height="12" fill="#222"/>
<rect x="725" y="989" width="8" height="10" fill="#5aa0d8"/><rect x="738" y="988" width="10" height="9" fill="#ddd"/>
<path d="M743 977 L748 988M750 979 L755 990" stroke="#ccc" stroke-width="1.2"/>
<path d="M756 997 L762 992 L770 993 L777 997Z" fill="#e0b818"/>
<path d="M789 966 L791 994M789 967 L804 982 L806 993" stroke="#c84040" stroke-width="1.2" fill="none"/>
<rect x="773" y="974" width="1.5" height="20" fill="#ccc"/>
<path d="M693 999 L818.7 994 L812 1008 L693 1004Z" fill="#253a6a"/>
<path d="M693 1001 L775 1000 L812 1008 L811 1016 L694 1006Z" fill="#a86c50"/>
<path d="M646 1000 L692 999 L690 1007 L648 1007Z" fill="#1d2330"/>
<path d="M662 990 L679 988 L680 1000 L662 1000Z" fill="#e8eaec"/><rect x="672.5" y="981" width="1.5" height="8" fill="#d03030"/>

</g>
</svg>
<svg class="abs" style="left:1097px;top:837px" width="761" height="195" viewBox="269 837 761 195">
<rect x="269" y="837" width="761" height="195" fill="#b5cfec"/>
<polygon points="541.0,857.7 576.8,857.7 578.8,869.6 574.9,889.4 572.9,909.2 568.9,925.0 561.0,939.0 537.2,946.8 517.4,948.8 505.5,954.8 491.7,972.6 485.7,978.5 477.8,977.5 458.0,972.6 455.0,967.6 468.0,964.7 493.7,956.7 507.5,942.9 509.5,929.0 515.4,913.0 519.4,899.3 533.3,881.5 541.2,861.7" fill="#f3f1e9" />
<path d="M575.0 857.7 C575.5 860.6 578.5 868.8 578.0 875.0 C577.5 881.2 573.0 888.8 572.0 895.0 C571.0 901.2 573.2 907.0 572.0 912.0 C570.8 917.0 569.0 920.3 565.0 925.0 C561.0 929.7 553.3 936.8 548.0 940.0 C542.7 943.2 539.0 942.3 533.0 944.0 C527.0 945.7 517.2 947.0 512.0 950.0 C506.8 953.0 505.0 958.0 502.0 962.0 C499.0 966.0 496.7 971.2 494.0 974.0 C491.3 976.8 487.3 978.2 486.0 979.0" fill="none" stroke="#f9b650" stroke-width="1" />
<polygon points="269.0,958.7 285.7,952.8 289.7,956.7 287.7,966.6 293.7,984.5 297.6,1002.3 293.7,1018.0 289.7,1032.0 269.0,1032.0" fill="#f3f1e9" />
<path d="M269.0 972.0 C270.8 972.5 277.5 972.8 280.0 975.0 C282.5 977.2 281.7 980.8 284.0 985.0 C286.3 989.2 292.7 995.0 294.0 1000.0 C295.3 1005.0 293.8 1009.7 292.0 1015.0 C290.2 1020.3 284.5 1029.2 283.0 1032.0" fill="none" stroke="#f9b650" stroke-width="1.2" />
<path d="M269.0 910.2 C272.4 910.0 281.3 907.1 289.7 909.2 C298.1 911.3 312.1 917.4 319.4 923.0 C326.7 928.6 330.0 933.6 333.3 942.9 C336.6 952.1 337.9 968.3 339.2 978.5 C340.5 988.7 341.9 995.4 341.2 1004.3 C340.5 1013.2 336.2 1027.4 335.2 1032.0" fill="none" stroke="rgba(150,145,140,.65)" stroke-width="0.9" />
<path d="M491.7 857.7 C489.1 863.7 484.7 882.2 475.8 893.4 C466.9 904.6 447.8 916.4 438.2 925.0 C428.6 933.6 422.7 936.3 418.4 944.9 C414.1 953.5 411.8 967.3 412.5 976.5 C413.2 985.7 417.4 994.0 422.4 1000.3 C427.3 1006.6 431.3 1010.6 442.2 1014.2 C453.1 1017.8 476.8 1021.7 487.7 1022.0 C498.6 1022.3 495.9 1021.7 507.5 1016.1 C519.0 1010.5 543.8 995.6 557.0 988.4 C570.2 981.1 579.4 977.9 586.7 972.6 C594.0 967.3 596.4 961.8 600.6 956.7 C604.8 951.6 607.1 947.3 612.0 942.0 C616.9 936.7 627.0 927.8 630.0 925.0" fill="none" stroke="rgba(150,145,140,.65)" stroke-width="0.9" />
<polyline points="632.3,857.7 620.4,877.5" fill="none" stroke="rgba(150,145,140,.65)" stroke-width="0.9" stroke-linejoin="round" />
<path d="M995.4 857.0 C992.3 862.2 987.6 879.7 976.7 888.0 C965.8 896.3 948.1 899.0 929.8 906.9 C911.5 914.8 880.8 929.0 866.8 935.2 C852.8 941.4 849.5 942.5 846.0 944.0" fill="none" stroke="rgba(150,145,140,.65)" stroke-width="0.9" />
<polygon points="1031.0,886.0 1022.0,898.0 1011.4,914.0 992.5,926.8 948.4,942.5 918.0,956.0 898.0,969.3 872.8,977.2 847.6,980.3 820.0,985.0 820.0,1032.0 1031.0,1032.0" fill="#f3f1e9" />
<path d="M898.0 969.5 C894.8 970.8 884.2 973.6 879.0 977.0 C873.8 980.4 870.2 985.6 866.5 989.8 C862.8 994.0 860.1 998.9 857.0 1002.0 C853.9 1005.1 849.2 1007.6 847.6 1008.7" fill="none" stroke="#f9b650" stroke-width="1" />
<polyline points="862.0,985.0 868.0,990.0 872.0,983.0" fill="none" stroke="#a8c8e8" stroke-width="1" stroke-linejoin="round" />
<text x="503.6" y="915.5" font-family="Liberation Sans" font-size="11.5" text-anchor="start" fill="#555" textLength="78" lengthAdjust="spacingAndGlyphs" stroke="#fff" stroke-width="2.5" stroke-opacity=".75" paint-order="stroke">Fuerteventura</text>
<text x="271.0" y="967.0" font-family="Liberation Sans" font-size="13" text-anchor="start" fill="#555" textLength="99" lengthAdjust="spacingAndGlyphs" stroke="#fff" stroke-width="2.5" stroke-opacity=".75" paint-order="stroke">de Gran Canaria</text>
<text x="270.0" y="1005.0" font-family="Liberation Sans" font-size="13" text-anchor="start" fill="#555" stroke="#fff" stroke-width="2.5" stroke-opacity=".75" paint-order="stroke">ia</text>
<rect x="269" y="837" width="761" height="20" fill="#25477c"/><text x="276" y="852" font-family="Liberation Sans" font-weight="bold" font-size="14" letter-spacing="-.3" fill="#fff">VesselFinder.com</text><text x="791.7" y="852" font-family="Liberation Sans" font-size="13.2" fill="#fff" textLength="100" lengthAdjust="spacingAndGlyphs">Embed this map</text><rect x="906.5" y="842" width="1.3" height="12" fill="#fff"/><text x="923.0" y="852" font-family="Liberation Sans" font-size="13.2" fill="#fff" textLength="21" lengthAdjust="spacingAndGlyphs">iOS</text><rect x="959.0" y="842" width="1.3" height="12" fill="#fff"/><text x="975.0" y="852" font-family="Liberation Sans" font-size="13.2" fill="#fff" textLength="50" lengthAdjust="spacingAndGlyphs">Android</text>
<rect x="275" y="862" width="74" height="19" rx="4" fill="rgba(0,60,136,.3)"/><polyline points="278,865 278,878 345,878 345,865" fill="none" stroke="#fff" stroke-width="1.2"/><text x="312" y="875" font-family="Liberation Sans" font-weight="bold" font-size="10" fill="#eee" text-anchor="middle">20 nm</text>
<rect x="969.0" y="930.0" width="37" height="72" rx="4" fill="rgba(255,255,255,.4)"/><path d="M973.0 932.0h29a2 2 0 0 1 2 2v31h-33v-31a2 2 0 0 1 2-2z" fill="rgba(0,60,136,.5)"/><path d="M971.0 966.0h33v31a2 2 0 0 1-2 2h-29a2 2 0 0 1-2-2z" fill="rgba(0,60,136,.5)"/><path d="M983.0 948.0H992.0M987.5 944.0V952.5" stroke="#fff" stroke-width="2.4"/><path d="M983.0 983.5H992.0" stroke="#fff" stroke-width="2.4"/>
<rect x="600" y="877" width="246" height="170" rx="4" fill="#eef2f8" stroke="rgba(0,0,0,.12)" stroke-width="1"/>
<rect x="604.5" y="887" width="24.5" height="18" fill="#c1272d"/>
<path d="M616.7 893.5l.8 2.3h2.4l-1.9 1.4.7 2.3-2-1.4-2 1.4.7-2.3-1.9-1.4h2.4z" fill="#2a4a2a"/>
<text x="634" y="895.2" font-family="Liberation Sans" font-weight="bold" font-size="12.5" fill="#1d3a75" textLength="87" lengthAdjust="spacingAndGlyphs">SIDI BANNOUR</text>
<text x="634" y="907" font-family="Liberation Sans" font-size="12" fill="#333">Tug</text>
<circle cx="831" cy="896" r="7" fill="#888"/><path d="M828 893L834 899M834 893L828 899" stroke="#fff" stroke-width="1.5"/>
<clipPath id="ph1097"><rect x="604" y="913" width="238" height="120"/></clipPath><g clip-path="url(#ph1097)">
<defs><linearGradient id="np" x1="0" y1="0" x2="0" y2="1"><stop offset="0" stop-color="#f0f2f6"/><stop offset="1" stop-color="#e9ebef"/></linearGradient></defs>
<rect x="604" y="913.5" width="238" height="119" fill="url(#np)"/>
<path d="M628 1032 L632 1024 L634 1000 L636 986 L642 979 L656 977 L657 970 L666 970 L667 977 L690 978 L692 1012 L717 1012 L717 1004 L745 1004 L745 996 L790 996 L790 1004 L812 1004 L813 1012 L828 1016 L822 1032Z" fill="#dfe1e5"/>
<path d="M662 958V970M658 962H666" stroke="#dfe1e5" stroke-width="1.2"/>
<g fill="#d3d5da"><rect x="645" y="985" width="40" height="1.5"/><rect x="645" y="993" width="40" height="1.5"/><rect x="645" y="1001" width="40" height="1.5"/></g>
<text x="724" y="999" font-family="Liberation Sans" font-weight="bold" font-size="34" fill="#c9cbd0" text-anchor="middle" transform="rotate(-32 724 987)">NO PHOTO</text>
</g>
</svg>
<div id="taskbar">
 <svg class="abs" style="left:639px;top:13px" width="23" height="23" viewBox="0 0 23 23"><defs><linearGradient id="wl" x1="0" y1="0" x2="1" y2="1"><stop offset="0" stop-color="#6dd5fb"/><stop offset="1" stop-color="#1a95ee"/></linearGradient></defs><rect x="0" y="0" width="11" height="11" fill="url(#wl)"/><rect x="12" y="0" width="11" height="11" fill="url(#wl)"/><rect x="0" y="12" width="11" height="11" fill="url(#wl)"/><rect x="12" y="12" width="11" height="11" fill="url(#wl)"/></svg>
 <div class="abs" style="left:675px;top:8px;width:220px;height:32px;border-radius:16px;background:rgba(255,255,255,.16);border:1px solid rgba(255,255,255,.12)"></div>
 <svg class="abs" style="left:687px;top:16px" width="16" height="16" viewBox="0 0 16 16"><circle cx="6.8" cy="6.8" r="5.3" stroke="#e0e3ea" stroke-width="1.6" fill="none"/><path d="M10.6 10.6L14.6 14.6" stroke="#e0e3ea" stroke-width="1.7" stroke-linecap="round"/></svg>
 <div class="abs" style="left:712px;top:16px;font-size:13.4px;color:#d8dbe3">Search</div>
 <svg class="abs" style="left:842px;top:10px" width="48" height="28" viewBox="0 0 48 28"><path d="M2 18L16 13M3 22L17 14M5 25L18 15M8 26L19 16" stroke="#b8a8e0" stroke-width="1"/><path d="M16 11L34 2L36 6L18 16Z" fill="#d8d0f0"/><rect x="25" y="12" width="18" height="10" rx="3" fill="#e0a838" transform="rotate(20 34 17)"/><circle cx="6" cy="5" r="1" fill="#f0c040"/><circle cx="44" cy="4" r="1.2" fill="#f0c040"/><circle cx="12" cy="24" r="1" fill="#f0c040"/><circle cx="40" cy="9" r="1" fill="#f0c040"/></svg>
 <svg class="abs" style="left:907px;top:12px" width="25" height="23" viewBox="0 0 25 23"><rect x="0" y="8" width="18" height="15" rx="2" fill="#6f7178"/><rect x="7" y="0" width="18" height="16" rx="2" fill="#f0f0f2"/><rect x="7" y="8" width="11" height="8" fill="#b9babd"/></svg>
 <svg class="abs" style="left:952px;top:13px" width="23" height="23" viewBox="0 0 23 23"><circle cx="11.5" cy="11.5" r="11" fill="#fff"/><circle cx="11.5" cy="11.5" r="9.3" fill="#111"/><circle cx="11.5" cy="11.5" r="7" fill="#e01515"/></svg>
 <svg class="abs" style="left:995px;top:12px" width="24" height="24" viewBox="0 0 24 24"><rect width="24" height="24" rx="2" fill="#4b4b4b"/><path d="M6 9L18 5V9L6 13ZM6 13L18 17V13L6 9ZM6 15L18 11V15L6 19Z" fill="#ff9800"/></svg>
 <svg class="abs" style="left:1038px;top:12px" width="26" height="25" viewBox="0 0 26 25"><path d="M0.5 8.5L3.5 6.8 19 19.5V24.5L17.5 24.8 0.5 10.5Z" fill="#0a6fc0"/><path d="M0.5 16.5L3.5 18.2 19 5.5V0.5L17.5 0.2 0.5 14.5Z" fill="#1a86d8"/><path d="M18 0.3L25.5 3.5V21.5L18 24.7Z" fill="#27a6f5"/></svg>
 <svg class="abs" style="left:1083px;top:13px" width="24" height="22" viewBox="0 0 24 22"><path d="M0 2Q0 0 2 0H9L11 3H22Q24 3 24 5V20Q24 22 22 22H2Q0 22 0 20Z" fill="#e8b93a"/><rect x="0" y="5" width="24" height="17" rx="2" fill="#ffd35c"/><rect x="5" y="14" width="14" height="8" rx="1.5" fill="#1d7fd8"/></svg>
 <div class="abs" style="left:1119px;top:4px;width:39px;height:40px;border-radius:5px;background:rgba(255,255,255,.08)"></div>
 <svg class="abs" style="left:1126px;top:12px" width="30" height="26" viewBox="0 0 30 26"><circle cx="12" cy="13" r="12" fill="#db4437"/><path d="M12 13L22.4 7A12 12 0 0 1 12 25Z" fill="#fcc934"/><path d="M12 13L12 25A12 12 0 0 1 1.6 7Z" fill="#1e8e3e"/><circle cx="12" cy="13" r="5.3" fill="#fff"/><circle cx="12" cy="13" r="4.2" fill="#1a73e8"/><circle cx="22" cy="6" r="6" fill="#f1a99b"/><path d="M16 9L28 6V12Q22 14 16 9Z" fill="#c9cdd6"/><circle cx="20" cy="20" r="5.5" fill="#c9cdd6"/><path d="M21 2V10M20 16V23" stroke="#333" stroke-width="1.6"/></svg>
 <svg class="abs" style="left:1171px;top:12px" width="24" height="24" viewBox="0 0 24 24"><circle cx="12" cy="12" r="12" fill="#db4437"/><path d="M12 12L22.4 6A12 12 0 0 1 12 24Z" fill="#fcc934"/><path d="M12 12L12 24A12 12 0 0 1 1.6 6Z" fill="#1e8e3e"/><circle cx="12" cy="12" r="5.5" fill="#fff"/><circle cx="12" cy="12" r="4.3" fill="#1a73e8"/></svg>
 <svg class="abs" style="left:1215px;top:14px" width="24" height="19" viewBox="0 0 24 19"><rect width="24" height="19" rx="1.5" fill="#2c2c2c"/><rect width="24" height="3" fill="#8a8a8a"/><path d="M3 7L7 10 3 13" stroke="#e8e8e8" stroke-width="1.6" fill="none"/><path d="M9 14H16" stroke="#e8e8e8" stroke-width="1.6"/></svg>
 <svg class="abs" style="left:1259px;top:12px" width="25" height="25" viewBox="0 0 25 25"><defs><linearGradient id="eg" x1="0" y1="0" x2="1" y2="1"><stop offset="0" stop-color="#52d87a"/><stop offset=".5" stop-color="#1aa4e8"/><stop offset="1" stop-color="#0c59a4"/></linearGradient></defs><circle cx="12.5" cy="12.5" r="12" fill="url(#eg)"/><path d="M5 16Q6 8 13 8Q19 8 19 13H10Q11 19 18 18Q14 22 10 21Q5 20 5 16Z" fill="#0f2e5c" opacity=".55"/></svg>
 <div class="abs" style="left:1004px;top:40px;width:6px;height:3px;border-radius:2px;background:#8e93a3"></div>
 <div class="abs" style="left:1048px;top:40px;width:6px;height:3px;border-radius:2px;background:#8e93a3"></div>
 <div class="abs" style="left:1092px;top:40px;width:6px;height:3px;border-radius:2px;background:#8e93a3"></div>
 <div class="abs" style="left:1131px;top:40px;width:16px;height:3px;border-radius:2px;background:#4cc2ff"></div>
 <svg class="abs" style="left:1704px;top:18px" width="12" height="8" viewBox="0 0 12 8"><path d="M1 7L6 2 11 7" stroke="#fff" stroke-width="1.4" fill="none"/></svg>
 <svg class="abs" style="left:1733px;top:16px" width="18" height="14" viewBox="0 0 18 14"><path d="M1 5Q9 -2 17 5M3.5 7.5Q9 3 14.5 7.5M6 10Q9 7.5 12 10" stroke="#fff" stroke-width="1.4" fill="none"/><circle cx="9" cy="12.5" r="1.3" fill="#fff"/></svg>
 <svg class="abs" style="left:1757px;top:15px" width="18" height="16" viewBox="0 0 18 16"><path d="M1 5.5H4L8 2V14L4 10.5H1Z" stroke="#fff" stroke-width="1.3" fill="none" stroke-linejoin="round"/><path d="M11 5Q13 8 11 11M13.5 3Q17 8 13.5 13" stroke="#fff" stroke-width="1.3" fill="none"/></svg>
 <svg class="abs" style="left:1781px;top:14px" width="18" height="17" viewBox="0 0 18 17"><rect x="1" y="5" width="14" height="9" rx="1.5" stroke="#fff" stroke-width="1.3" fill="none"/><rect x="15.5" y="8" width="1.5" height="3" fill="#fff"/><path d="M6 1L3.5 8H7L5 15" stroke="#fff" stroke-width="1.2" fill="none"/></svg>
 <div class="abs" style="left:1800px;top:9px;width:76px;text-align:right;font-size:12.2px;color:#fff;line-height:16px">2:27 PM<br>12/31/2023</div>
 <svg class="abs" style="left:1884px;top:15px" width="15" height="17" viewBox="0 0 15 17"><path d="M7.5 1.5Q12 1.5 12 6.5V11L14 13.5H1L3 11V6.5Q3 1.5 7.5 1.5Z" stroke="#fff" stroke-width="1.3" fill="none" stroke-linejoin="round"/><path d="M5.5 15Q7.5 17 9.5 15" stroke="#fff" stroke-width="1.3" fill="none"/></svg>
</div>
</body></html>
